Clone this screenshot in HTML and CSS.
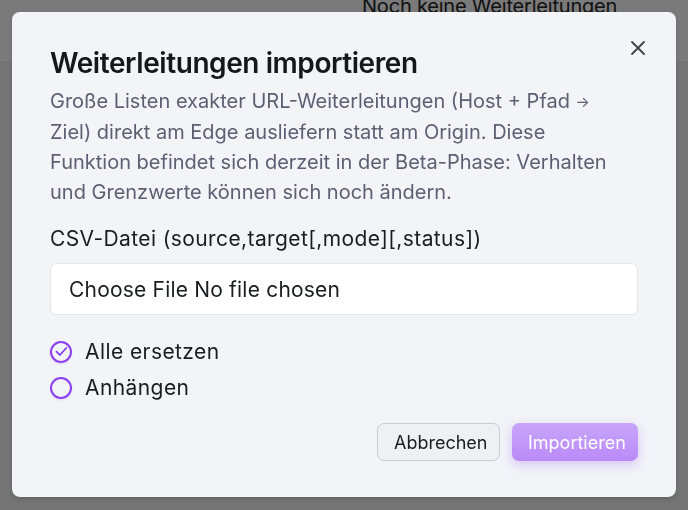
FILE: index.html
```html
<!DOCTYPE html>
<html lang="de">
<head>
<meta charset="utf-8">
<title>Weiterleitungen importieren</title>
<link rel="stylesheet" href="styles.css">
</head>
<body>
<div class="page">
  <header class="page-header">
    <div class="empty-note">Noch keine Weiterleitungen</div>
  </header>
  <main class="page-main"></main>
</div>
<div class="overlay">
  <div class="dialog" role="dialog" aria-labelledby="dlg-title">
    <button class="close" aria-label="Schließen">
      <svg width="16" height="16" viewBox="0 0 16 16"><path d="M2 2 L14 14 M14 2 L2 14" stroke="#3f4248" stroke-width="1.8" stroke-linecap="round"/></svg>
    </button>
    <h2 id="dlg-title" class="title">Weiterleitungen importieren</h2>
    <p class="desc">Große Listen exakter URL-Weiterleitungen (Host + Pfad <span class="arrow">→</span> Ziel) direkt am Edge ausliefern statt am Origin. Diese Funktion befindet sich derzeit in der Beta-Phase: Verhalten und Grenzwerte können sich noch ändern.</p>
    <div class="field-label">CSV-Datei (source,target[,mode][,status])</div>
    <div class="file-box">
      <span class="file-btn">Choose File</span>
      <span class="file-name">No file chosen</span>
    </div>
    <div class="options">
      <label class="option">
        <span class="radio checked">
          <svg width="13" height="11" viewBox="0 0 13 11"><path d="M1.5 5.6 L4.9 9 L11.5 1.8" fill="none" stroke="#7c3aed" stroke-width="1.7" stroke-linecap="round" stroke-linejoin="round"/></svg>
        </span>
        <span>Alle ersetzen</span>
      </label>
      <label class="option">
        <span class="radio"></span>
        <span>Anhängen</span>
      </label>
    </div>
    <div class="actions">
      <button class="btn btn-secondary">Abbrechen</button>
      <button class="btn btn-primary">Importieren</button>
    </div>
  </div>
</div>
</body>
</html>
```
FILE: styles.css
```css
* { box-sizing: border-box; }
html, body { margin: 0; padding: 0; }
body {
  width: 688px;
  height: 510px;
  overflow: hidden;
  font-family: Inter, "Noto Sans", sans-serif;
  background: #e8e8e8;
}
.page { width: 688px; height: 510px; display: flex; flex-direction: column; }
.page-header {
  height: 61px;
  background: #f4f4f4;
  border-bottom: 1px solid #fbfbfb;
  position: relative;
}
.empty-note {
  padding-left: 362px;
  margin-top: -6px;
  font-size: 20px;
  letter-spacing: -0.2px;
  color: #222;
}
.page-main { flex: 1; background: #e8e8e8; }

.overlay {
  position: fixed;
  inset: 0;
  background: rgba(0,0,0,0.5);
  padding: 12px;
}
.dialog {
  position: relative;
  width: 664px;
  height: 485px;
  background: #f3f4f8;
  border-radius: 8px;
  box-shadow: 0 2px 4px rgba(0,0,0,0.15);
  padding: 32px 38px 36px;
  display: flex;
  flex-direction: column;
}
.close {
  position: absolute;
  top: 19px;
  right: 21px;
  width: 34px;
  height: 34px;
  border: 0;
  background: transparent;
  display: flex;
  align-items: center;
  justify-content: center;
  padding: 0;
}
.title {
  margin: 0;
  font-size: 28px;
  line-height: 38px;
  font-weight: 600;
  color: #16171a;
  letter-spacing: -0.015em;
}
.desc {
  margin: 4px 0 0;
  max-width: 572px;
  font-size: 20px;
  line-height: 30px;
  color: #5c6072;
}
.arrow {
  font-size: 15px;
  vertical-align: 1px;
}
.field-label {
  margin-top: 18px;
  font-size: 21px;
  letter-spacing: 0.4px;
  line-height: 28px;
  color: #1b1c20;
}
.file-box {
  margin-top: 10px;
  height: 52px;
  background: #fff;
  border: 1px solid #e6e7ec;
  border-radius: 6px;
  display: flex;
  align-items: center;
  padding: 0 18px;
  font-size: 21px;
  letter-spacing: 0.2px;
  color: #1b1c20;
  gap: 6px;
}
.options {
  margin-top: 24px;
  display: flex;
  flex-direction: column;
  gap: 11px;
}
.option {
  display: flex;
  align-items: center;
  gap: 13px;
  font-size: 21px;
  color: #1b1c20;
  letter-spacing: 0.02em;
}
.radio {
  width: 22px;
  height: 22px;
  border: 2px solid #8b3ff0;
  border-radius: 50%;
  display: flex;
  align-items: center;
  justify-content: center;
  background: transparent;
  box-shadow: 0 1px 2px rgba(124,58,237,0.15);
}
.actions {
  margin-top: auto;
  display: flex;
  justify-content: flex-end;
  gap: 12px;
}
.btn {
  height: 38px;
  font-family: Inter, "Noto Sans", sans-serif;
  font-size: 18px;
  border-radius: 7px;
  padding: 0 16px;
}
.btn-secondary {
  width: 123px;
  background: #eef0f4;
  border: 1px solid #c9cbd0;
  color: #1b1c20;
}
.btn-primary {
  width: 126px;
  border: 0;
  color: #fff;
  background: linear-gradient(#c8a6fb, #b98af8);
  box-shadow: 0 4px 12px rgba(160,110,245,0.35);
}
```
